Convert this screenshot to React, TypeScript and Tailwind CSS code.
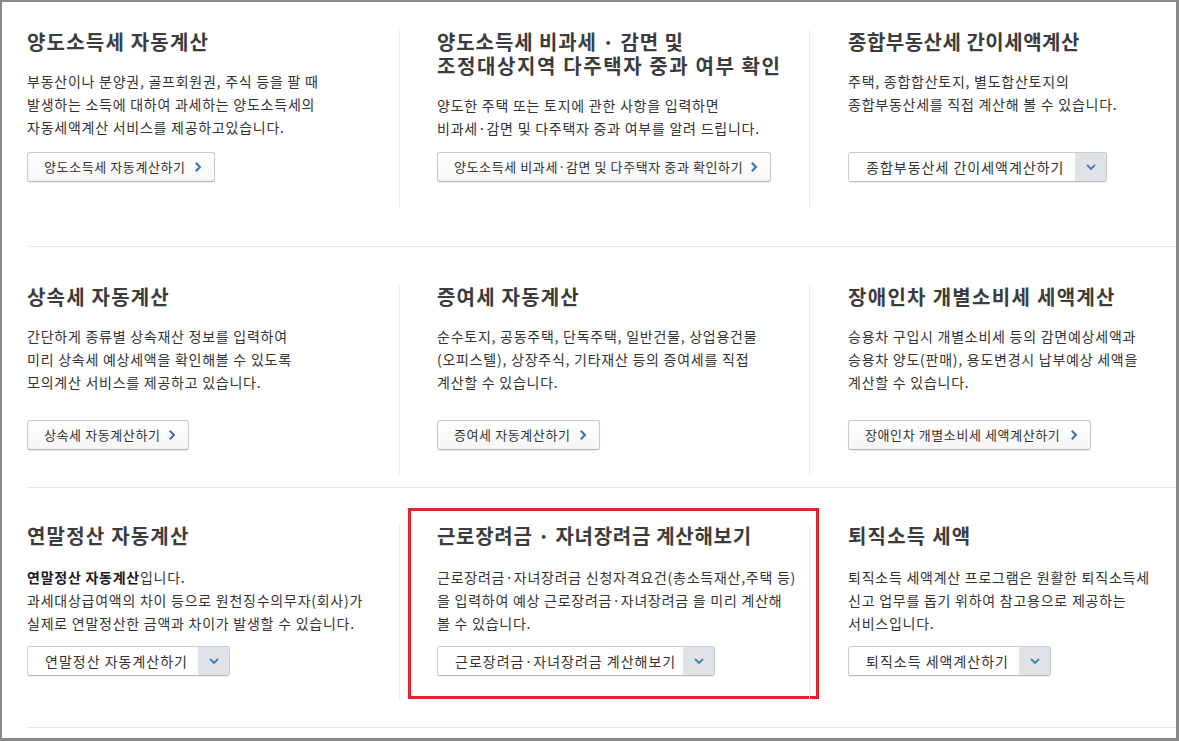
import React from "react";

const FONT = { fontFamily: '"Noto Sans CJK KR", "Noto Sans", sans-serif' };

function ChevronRight() {
  return (
    <svg width="7" height="10" viewBox="0 0 7 10" className="shrink-0">
      <polyline points="1.5,1.5 5,5 1.5,8.5" fill="none" stroke="#3f6fae" strokeWidth="2" strokeLinecap="square" />
    </svg>
  );
}

function ChevronDown() {
  return (
    <svg width="10" height="7" viewBox="0 0 10 7">
      <polyline points="1.5,1.5 5,5 8.5,1.5" fill="none" stroke="#4e78b3" strokeWidth="1.8" strokeLinecap="round" />
    </svg>
  );
}

function LinkButton({ label, w }: { label: string; w: string }) {
  return (
    <div
      className={`${w} h-[30px] flex items-center justify-between pl-4 pr-[12px] rounded-[3px] border border-[#c9c9c9] border-b-[#b3b3b3] bg-gradient-to-b from-white to-[#f6f6f6] shadow-[0_1px_1px_rgba(0,0,0,0.08)]`}
    >
      <span className="text-[13px] tracking-[0.6px] text-[#333] whitespace-nowrap">{label}</span>
      <ChevronRight />
    </div>
  );
}

function SelectButton({ label, w }: { label: string; w: string }) {
  return (
    <div
      className={`${w} h-[30px] flex rounded-[3px] border border-[#cbcbcb] border-b-[#b8b8b8] overflow-hidden shadow-[0_1px_1px_rgba(0,0,0,0.06)]`}
    >
      <div className="flex-1 flex items-center pl-[17px] bg-white">
        <span className="text-[14px] tracking-[1px] text-[#333] whitespace-nowrap">{label}</span>
      </div>
      <div className="w-[31px] flex items-center justify-center bg-[#dfe3e8]">
        <ChevronDown />
      </div>
    </div>
  );
}

type CellProps = {
  title: React.ReactNode;
  desc: React.ReactNode;
  button: React.ReactNode;
  h: string;
  gap: string;
  first?: boolean;
  pl?: string;
  titleTrack?: string;
  overlay?: React.ReactNode;
};

function Cell({ title, desc, button, h, gap, first, pl, titleTrack, overlay }: CellProps) {
  return (
    <div className={`relative ${h} flex flex-col pb-[25px] ${first ? "" : "border-l border-[#ececec]"} ${pl ?? ""}`}>
      {overlay}
      <h2 className={`text-[20px] leading-[24px] font-bold text-[#3c3c3c] ${titleTrack ?? "tracking-[1.2px]"} whitespace-nowrap`}>
        {title}
      </h2>
      <p className={`${gap} text-[14px] leading-[23px] tracking-[0.75px] text-[#333] whitespace-nowrap`}>{desc}</p>
      <div className="mt-auto">{button}</div>
    </div>
  );
}

export default function App() {
  return (
    <div
      style={FONT}
      className="w-[1179px] h-[741px] bg-white border-l-2 border-t-2 border-r-[3px] border-b-[3px] border-[#8a8a8a] overflow-hidden"
    >
      <div className="ml-[25px]">
        {/* Row 1 */}
        <div className="grid grid-cols-[372px_410px_1fr] pt-[28px] pb-[39px] border-b border-[#e6e6e6]">
          <Cell
            first
            h="h-[177px]"
            gap="mt-[16px]"
            title="양도소득세 자동계산"
            desc={
              <>
                부동산이나 분양권, 골프회원권, 주식 등을 팔 때
                <br />
                발생하는 소득에 대하여 과세하는 양도소득세의
                <br />
                자동세액계산 서비스를 제공하고있습니다.
              </>
            }
            button={<LinkButton w="w-[188px]" label="양도소득세 자동계산하기" />}
          />
          <Cell
            h="h-[177px]"
            gap="mt-[16px]"
            pl="pl-[37px]"
            titleTrack="tracking-[1.6px]"
            title={
              <>
                <span className="tracking-[0.9px]">양도소득세 비과세 · 감면 및</span>
                <br />
                조정대상지역 다주택자 중과 여부 확인
              </>
            }
            desc={
              <>
                양도한 주택 또는 토지에 관한 사항을 입력하면
                <br />
                비과세·감면 및 다주택자 중과 여부를 알려 드립니다.
              </>
            }
            button={<LinkButton w="w-[334px]" label="양도소득세 비과세·감면 및 다주택자 중과 확인하기" />}
          />
          <Cell
            h="h-[177px]"
            gap="mt-[16px]"
            pl="pl-[38px]"
            titleTrack="tracking-[0.5px]"
            title="종합부동산세 간이세액계산"
            desc={
              <>
                주택, 종합합산토지, 별도합산토지의
                <br />
                종합부동산세를 직접 계산해 볼 수 있습니다.
              </>
            }
            button={<SelectButton w="w-[259px]" label="종합부동산세 간이세액계산하기" />}
          />
        </div>

        {/* Row 2 */}
        <div className="grid grid-cols-[372px_410px_1fr] pt-[38px] pb-[12px] border-b border-[#e6e6e6]">
          <Cell
            first
            h="h-[190px]"
            gap="mt-[16px]"
            title="상속세 자동계산"
            desc={
              <>
                간단하게 종류별 상속재산 정보를 입력하여
                <br />
                미리 상속세 예상세액을 확인해볼 수 있도록
                <br />
                모의계산 서비스를 제공하고 있습니다.
              </>
            }
            button={<LinkButton w="w-[162px]" label="상속세 자동계산하기" />}
          />
          <Cell
            h="h-[190px]"
            gap="mt-[16px]"
            pl="pl-[37px]"
            title="증여세 자동계산"
            desc={
              <>
                순수토지, 공동주택, 단독주택, 일반건물, 상업용건물
                <br />
                (오피스텔), 상장주식, 기타재산 등의 증여세를 직접
                <br />
                계산할 수 있습니다.
              </>
            }
            button={<LinkButton w="w-[163px]" label="증여세 자동계산하기" />}
          />
          <Cell
            h="h-[190px]"
            gap="mt-[16px]"
            pl="pl-[38px]"
            titleTrack="tracking-[1.3px]"
            title="장애인차 개별소비세 세액계산"
            desc={
              <>
                승용차 구입시 개별소비세 등의 감면예상세액과
                <br />
                승용차 양도(판매), 용도변경시 납부예상 세액을
                <br />
                계산할 수 있습니다.
              </>
            }
            button={<LinkButton w="w-[243px]" label="장애인차 개별소비세 세액계산하기" />}
          />
        </div>

        {/* Row 3 */}
        <div className="grid grid-cols-[372px_410px_1fr] pt-[36px] pb-[26px] border-b border-[#e6e6e6]">
          <Cell
            first
            h="h-[177px]"
            gap="mt-[18px]"
            title="연말정산 자동계산"
            desc={
              <>
                <b className="font-bold text-[#1d1726]">연말정산 자동계산</b>입니다.
                <br />
                과세대상급여액의 차이 등으로 원천징수의무자(회사)가
                <br />
                실제로 연말정산한 금액과 차이가 발생할 수 있습니다.
              </>
            }
            button={<SelectButton w="w-[203px]" label="연말정산 자동계산하기" />}
          />
          <Cell
            h="h-[177px]"
            gap="mt-[18px]"
            pl="pl-[37px]"
            titleTrack="tracking-[0.7px]"
            title="근로장려금 · 자녀장려금 계산해보기"
            overlay={
              <div className="absolute left-[8px] top-[-16px] w-[411px] h-[191px] border-[3px] border-[#e2232c] pointer-events-none" />
            }
            desc={
              <>
                근로장려금·자녀장려금 신청자격요건(총소득재산,주택 등)
                <br />
                을 입력하여 예상 근로장려금·자녀장려금 을 미리 계산해
                <br />
                볼 수 있습니다.
              </>
            }
            button={<SelectButton w="w-[278px]" label="근로장려금·자녀장려금 계산해보기" />}
          />
          <Cell
            h="h-[177px]"
            gap="mt-[18px]"
            pl="pl-[38px]"
            title="퇴직소득 세액"
            desc={
              <>
                퇴직소득 세액계산 프로그램은 원활한 퇴직소득세
                <br />
                신고 업무를 돕기 위하여 참고용으로 제공하는
                <br />
                서비스입니다.
              </>
            }
            button={<SelectButton w="w-[203px]" label="퇴직소득 세액계산하기" />}
          />
        </div>
      </div>
    </div>
  );
}
